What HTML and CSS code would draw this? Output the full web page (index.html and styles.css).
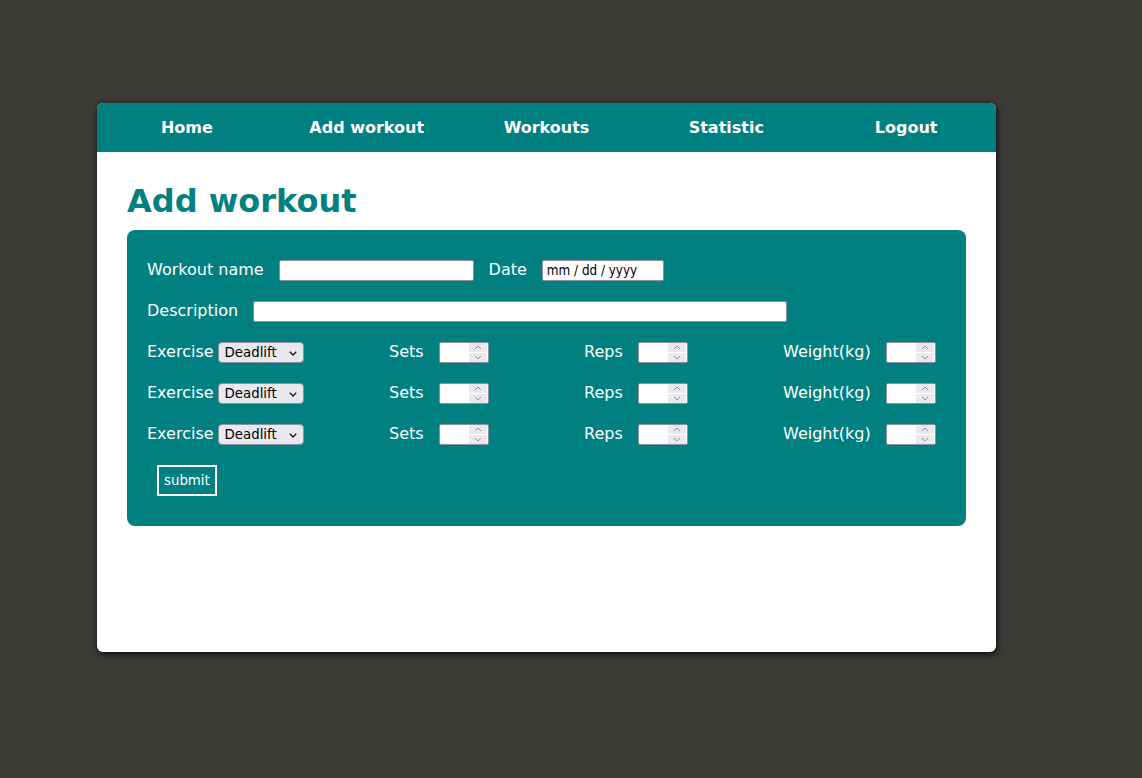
FILE: index.html
```html
<!DOCTYPE html>
<html lang="en">
<head>
<meta charset="utf-8">
<title>Add workout</title>
<link rel="stylesheet" href="styles.css">
</head>
<body>
<div class="card">
  <nav class="nav">
    <a class="nav-item" href="#">Home</a>
    <a class="nav-item" href="#">Add workout</a>
    <a class="nav-item" href="#">Workouts</a>
    <a class="nav-item" href="#">Statistic</a>
    <a class="nav-item" href="#">Logout</a>
  </nav>
  <main class="content">
    <h1 class="title">Add workout</h1>
    <form class="form">
      <div class="row">
        <label class="lbl">Workout name</label>
        <input class="inp inp-name" type="text">
        <label class="lbl gap">Date</label>
        <input class="inp inp-date" type="text" placeholder="mm / dd / yyyy">
      </div>
      <div class="row">
        <label class="lbl">Description</label>
        <input class="inp inp-desc" type="text">
      </div>
      <div class="row ex-row">
        <div class="grp"><label class="lbl">Exercise</label><span class="sel-wrap"><select class="sel"><option>Deadlift</option></select><svg class="sel-chev" width="8" height="5" viewBox="0 0 8 5"><path d="M0.8 0.8 L4 4 L7.2 0.8" fill="none" stroke="#1a1a1a" stroke-width="1.4"/></svg></span></div>
        <div class="grp"><label class="lbl">Sets</label><span class="num-wrap"><input class="inp num" type="number"><span class="spin"><span class="spin-btn"><svg width="8" height="5" viewBox="0 0 8 5"><path d="M1 4 L4 1 L7 4" fill="none" stroke="#8f8f9d" stroke-width="1"/></svg></span><span class="spin-btn"><svg width="8" height="5" viewBox="0 0 8 5"><path d="M1 1 L4 4 L7 1" fill="none" stroke="#8f8f9d" stroke-width="1"/></svg></span></span></span></div>
        <div class="grp"><label class="lbl">Reps</label><span class="num-wrap"><input class="inp num" type="number"><span class="spin"><span class="spin-btn"><svg width="8" height="5" viewBox="0 0 8 5"><path d="M1 4 L4 1 L7 4" fill="none" stroke="#8f8f9d" stroke-width="1"/></svg></span><span class="spin-btn"><svg width="8" height="5" viewBox="0 0 8 5"><path d="M1 1 L4 4 L7 1" fill="none" stroke="#8f8f9d" stroke-width="1"/></svg></span></span></span></div>
        <div class="grp"><label class="lbl">Weight(kg)</label><span class="num-wrap"><input class="inp num" type="number"><span class="spin"><span class="spin-btn"><svg width="8" height="5" viewBox="0 0 8 5"><path d="M1 4 L4 1 L7 4" fill="none" stroke="#8f8f9d" stroke-width="1"/></svg></span><span class="spin-btn"><svg width="8" height="5" viewBox="0 0 8 5"><path d="M1 1 L4 4 L7 1" fill="none" stroke="#8f8f9d" stroke-width="1"/></svg></span></span></span></div>
      </div>
      <div class="row ex-row">
        <div class="grp"><label class="lbl">Exercise</label><span class="sel-wrap"><select class="sel"><option>Deadlift</option></select><svg class="sel-chev" width="8" height="5" viewBox="0 0 8 5"><path d="M0.8 0.8 L4 4 L7.2 0.8" fill="none" stroke="#1a1a1a" stroke-width="1.4"/></svg></span></div>
        <div class="grp"><label class="lbl">Sets</label><span class="num-wrap"><input class="inp num" type="number"><span class="spin"><span class="spin-btn"><svg width="8" height="5" viewBox="0 0 8 5"><path d="M1 4 L4 1 L7 4" fill="none" stroke="#8f8f9d" stroke-width="1"/></svg></span><span class="spin-btn"><svg width="8" height="5" viewBox="0 0 8 5"><path d="M1 1 L4 4 L7 1" fill="none" stroke="#8f8f9d" stroke-width="1"/></svg></span></span></span></div>
        <div class="grp"><label class="lbl">Reps</label><span class="num-wrap"><input class="inp num" type="number"><span class="spin"><span class="spin-btn"><svg width="8" height="5" viewBox="0 0 8 5"><path d="M1 4 L4 1 L7 4" fill="none" stroke="#8f8f9d" stroke-width="1"/></svg></span><span class="spin-btn"><svg width="8" height="5" viewBox="0 0 8 5"><path d="M1 1 L4 4 L7 1" fill="none" stroke="#8f8f9d" stroke-width="1"/></svg></span></span></span></div>
        <div class="grp"><label class="lbl">Weight(kg)</label><span class="num-wrap"><input class="inp num" type="number"><span class="spin"><span class="spin-btn"><svg width="8" height="5" viewBox="0 0 8 5"><path d="M1 4 L4 1 L7 4" fill="none" stroke="#8f8f9d" stroke-width="1"/></svg></span><span class="spin-btn"><svg width="8" height="5" viewBox="0 0 8 5"><path d="M1 1 L4 4 L7 1" fill="none" stroke="#8f8f9d" stroke-width="1"/></svg></span></span></span></div>
      </div>
      <div class="row ex-row">
        <div class="grp"><label class="lbl">Exercise</label><span class="sel-wrap"><select class="sel"><option>Deadlift</option></select><svg class="sel-chev" width="8" height="5" viewBox="0 0 8 5"><path d="M0.8 0.8 L4 4 L7.2 0.8" fill="none" stroke="#1a1a1a" stroke-width="1.4"/></svg></span></div>
        <div class="grp"><label class="lbl">Sets</label><span class="num-wrap"><input class="inp num" type="number"><span class="spin"><span class="spin-btn"><svg width="8" height="5" viewBox="0 0 8 5"><path d="M1 4 L4 1 L7 4" fill="none" stroke="#8f8f9d" stroke-width="1"/></svg></span><span class="spin-btn"><svg width="8" height="5" viewBox="0 0 8 5"><path d="M1 1 L4 4 L7 1" fill="none" stroke="#8f8f9d" stroke-width="1"/></svg></span></span></span></div>
        <div class="grp"><label class="lbl">Reps</label><span class="num-wrap"><input class="inp num" type="number"><span class="spin"><span class="spin-btn"><svg width="8" height="5" viewBox="0 0 8 5"><path d="M1 4 L4 1 L7 4" fill="none" stroke="#8f8f9d" stroke-width="1"/></svg></span><span class="spin-btn"><svg width="8" height="5" viewBox="0 0 8 5"><path d="M1 1 L4 4 L7 1" fill="none" stroke="#8f8f9d" stroke-width="1"/></svg></span></span></span></div>
        <div class="grp"><label class="lbl">Weight(kg)</label><span class="num-wrap"><input class="inp num" type="number"><span class="spin"><span class="spin-btn"><svg width="8" height="5" viewBox="0 0 8 5"><path d="M1 4 L4 1 L7 4" fill="none" stroke="#8f8f9d" stroke-width="1"/></svg></span><span class="spin-btn"><svg width="8" height="5" viewBox="0 0 8 5"><path d="M1 1 L4 4 L7 1" fill="none" stroke="#8f8f9d" stroke-width="1"/></svg></span></span></span></div>
      </div>
      <div class="submit-row">
        <button class="submit" type="button">submit</button>
      </div>
    </form>
  </main>
</div>
</body>
</html>
```

FILE: styles.css
```css
html, body {
  margin: 0;
  padding: 0;
}
body {
  background: #3d3b38;
  font-family: "DejaVu Sans", sans-serif;
  min-height: 778px;
  padding-top: 103px;
  padding-left: 97px;
  box-sizing: border-box;
}
.card {
  width: 899px;
  height: 549px;
  background: #ffffff;
  border-radius: 6px;
  overflow: hidden;
  box-shadow: 1px 2px 6px rgba(0, 0, 0, 0.85);
}
.nav {
  display: flex;
  height: 49px;
  background: #008080;
}
.nav-item {
  flex: 1;
  text-align: center;
  line-height: 49px;
  color: #ffffff;
  font-weight: bold;
  font-size: 16px;
  text-decoration: none;
}
.content {
  padding: 0 30px;
}
.title {
  margin: 30px 0 10px;
  font-size: 32px;
  font-weight: bold;
  color: #008080;
  line-height: normal;
}
.form {
  background: #008080;
  border-radius: 8px;
  padding: 30px 20px;
  display: flex;
  flex-direction: column;
  gap: 20px;
}
.row {
  display: flex;
  align-items: center;
  height: 21px;
}
.lbl {
  color: #ffffff;
  font-size: 16px;
  white-space: nowrap;
  position: relative;
  top: -1px;
}
.gap {
  margin-left: 15px;
}
.inp {
  box-sizing: border-box;
  height: 21px;
  margin: 0 0 0 15px;
  border: 1px solid #8f8f9d;
  border-radius: 2px;
  background: #ffffff;
  padding: 1px 2px;
  font-family: "DejaVu Sans", sans-serif;
  font-size: 13.33px;
  outline: none;
}
.inp-name { width: 195px; }
.inp-desc { width: 534px; }
.inp-date {
  width: 122px;
  padding: 0 4px;
  color: #000000;
  font-family: "DejaVu Sans Condensed", "DejaVu Sans", sans-serif;
  font-stretch: condensed;
}
.inp-date::placeholder {
  color: #000000;
  opacity: 1;
}
.ex-row {
  display: grid;
  grid-template-columns: 242px 195px 199px 1fr;
  align-items: center;
}
.grp {
  display: flex;
  align-items: center;
}
.sel-wrap {
  position: relative;
  display: inline-flex;
  margin-left: 4px;
}
.sel {
  -webkit-appearance: none;
  appearance: none;
  box-sizing: border-box;
  width: 86px;
  height: 21px;
  margin: 0;
  padding: 0 0 0 6px;
  border: 1px solid #8f8f9d;
  border-radius: 4px;
  background: #e9e9ed;
  color: #000000;
  font-family: "DejaVu Sans", sans-serif;
  font-size: 13.33px;
  line-height: 19px;
}
.sel-chev {
  position: absolute;
  right: 7px;
  top: 9px;
  pointer-events: none;
}
.num-wrap {
  position: relative;
  display: inline-flex;
  margin-left: 15px;
}
.num {
  width: 50px;
  margin: 0;
  -moz-appearance: textfield;
  appearance: textfield;
}
.num::-webkit-inner-spin-button,
.num::-webkit-outer-spin-button {
  -webkit-appearance: none;
  margin: 0;
}
.spin {
  position: absolute;
  top: 1px;
  bottom: 1px;
  right: 2px;
  width: 18px;
  display: flex;
  flex-direction: column;
  gap: 1px;
  pointer-events: none;
}
.spin-btn {
  flex: 1;
  background: #e9e9ed;
  display: flex;
  align-items: center;
  justify-content: center;
}
.submit-row {
  display: flex;
}
.submit {
  margin-left: 10px;
  background: transparent;
  border: 2px solid #ffffff;
  color: #ffffff;
  font-family: "DejaVu Sans", sans-serif;
  font-size: 13.33px;
  line-height: 15px;
  padding: 6px 5px;
  cursor: pointer;
}
```
